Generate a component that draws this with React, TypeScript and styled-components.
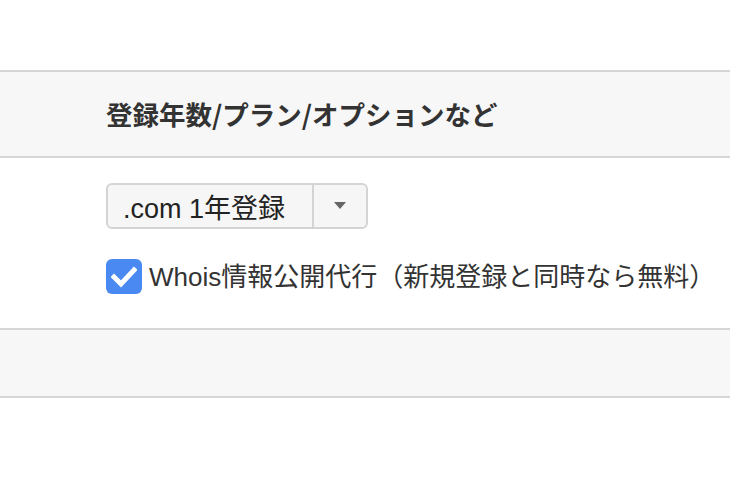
import React from "react";
import styled, { createGlobalStyle } from "styled-components";

const Global = createGlobalStyle`
  html, body { margin: 0; padding: 0; background: #fff; }
  body { font-family: "Liberation Sans", "Noto Sans CJK JP", sans-serif; color: #333; }
`;

const Page = styled.div`
  padding-top: 70px;
  width: 730px;
`;

const HeadRow = styled.div`
  background: #f7f7f7;
  border-top: 2px solid #d6d6d6;
  border-bottom: 2px solid #d6d6d6;
  height: 84px;
  display: flex;
  align-items: center;
  padding-left: 106px;
`;

const HeadText = styled.div`
  font-family: "Noto Sans CJK JP", sans-serif;
  font-size: 26.5px;
  font-weight: 700;
  line-height: 1;
  color: #333;
  white-space: nowrap;
`;

const BodyRow = styled.div`
  height: 170px;
  box-sizing: border-box;
  padding: 25px 0 0 106px;
  display: flex;
  flex-direction: column;
  gap: 30px;
`;

const Select = styled.div`
  display: flex;
  width: 262px;
  height: 46px;
  box-sizing: border-box;
  border: 2px solid #d4d4d4;
  border-radius: 6px;
  background: #f6f6f6;
`;

const SelectValue = styled.div`
  flex: 1;
  display: flex;
  align-items: center;
  padding-left: 15px;
  font-size: 27px;
  color: #222;
  border-right: 2px solid #d4d4d4;
  white-space: nowrap;
`;

const SelectArrow = styled.div`
  width: 52px;
  display: flex;
  align-items: center;
  justify-content: center;
`;

const CheckLabel = styled.label`
  display: flex;
  align-items: center;
  gap: 7px;
  font-size: 26px;
  line-height: 1;
  color: #333;
  white-space: nowrap;
`;

const Box = styled.span`
  width: 36px;
  height: 35px;
  border-radius: 6px;
  background: #4a89f2;
  display: flex;
  align-items: center;
  justify-content: center;
  flex-shrink: 0;
`;

const FootRow = styled.div`
  background: #f7f7f7;
  border-top: 2px solid #d6d6d6;
  border-bottom: 2px solid #d6d6d6;
  height: 66px;
`;

export default function App() {
  return (
    <Page>
      <Global />
      <HeadRow>
        <HeadText>登録年数/プラン/オプションなど</HeadText>
      </HeadRow>
      <BodyRow>
        <Select>
          <SelectValue>.com 1年登録</SelectValue>
          <SelectArrow>
            <svg width="12" height="8" viewBox="0 0 12 8">
              <path d="M0 0 H12 L6 7 Z" fill="#666" />
            </svg>
          </SelectArrow>
        </Select>
        <CheckLabel>
          <Box>
            <svg width="26" height="22" viewBox="0 0 26 22">
              <path d="M3 11 L10 18 L23 4" stroke="#fff" strokeWidth="5" fill="none" strokeLinecap="square" />
            </svg>
          </Box>
          Whois情報公開代行（新規登録と同時なら無料）
        </CheckLabel>
      </BodyRow>
      <FootRow />
    </Page>
  );
}
